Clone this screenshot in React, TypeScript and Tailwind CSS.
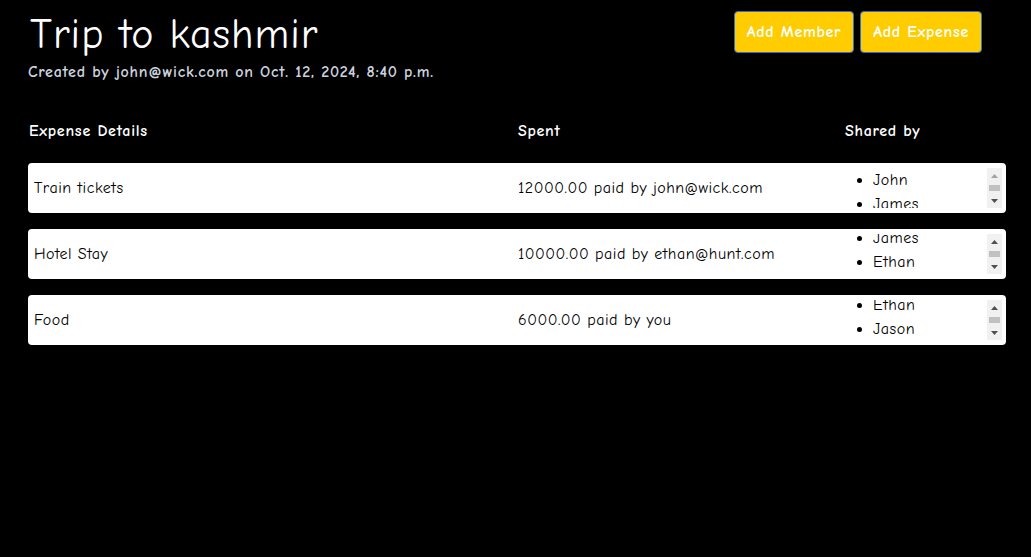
import React, { useEffect, useRef } from 'react';

type Expense = {
  id: number;
  title: string;
  amount: string;
  paidBy: string;
  sharedBy: string[];
  scroll: number;
  atTop: boolean;
};

const expenses: Expense[] = [
  { id: 1, title: 'Train tickets', amount: '12000.00', paidBy: 'john@wick.com', sharedBy: ['John', 'James', 'Ethan'], scroll: 0, atTop: true },
  { id: 2, title: 'Hotel Stay', amount: '10000.00', paidBy: 'ethan@hunt.com', sharedBy: ['John', 'James', 'Ethan'], scroll: 32, atTop: false },
  { id: 3, title: 'Food', amount: '6000.00', paidBy: 'you', sharedBy: ['James', 'Ethan', 'Jason'], scroll: 31, atTop: false },
];

// classic scrollbar look, drawn by hand since the headless one is hidden
const FakeScrollbar: React.FC<{ atTop: boolean }> = ({ atTop }) => (
  <div className="w-[15px] h-[40px] bg-[#f1f1f1] flex flex-col shrink-0">
    <div className="h-[15px] flex items-center justify-center">
      <svg width="7" height="4" viewBox="0 0 7 4">
        <polygon points="3.5,0 7,4 0,4" fill={atTop ? '#a3a3a3' : '#505050'} />
      </svg>
    </div>
    <div className="h-[10px] flex items-center px-[2px]">
      <div className="w-full h-[6px] bg-[#c1c1c1]" />
    </div>
    <div className="h-[15px] flex items-center justify-center">
      <svg width="7" height="4" viewBox="0 0 7 4">
        <polygon points="0,0 7,0 3.5,4" fill="#505050" />
      </svg>
    </div>
  </div>
);

const SharedList: React.FC<{ names: string[]; scroll: number; atTop: boolean }> = ({ names, scroll, atTop }) => {
  const ref = useRef<HTMLDivElement>(null);

  useEffect(() => {
    if (ref.current) ref.current.scrollTop = scroll;
  }, [scroll]);

  return (
    <div className="flex h-[40px]">
      <div ref={ref} className="flex-1 h-[40px] overflow-hidden">
        <ul className="list-disc pl-[28px]">
          {names.map((n) => (
            <li key={n} className="leading-[24px]">{n}</li>
          ))}
        </ul>
      </div>
      <FakeScrollbar atTop={atTop} />
    </div>
  );
};

export default function App() {
  return (
    <div
      className="min-h-[557px] bg-black text-white px-[28px] pt-[10px]"
      style={{ fontFamily: '"Comic Sans MS", "Comic Neue", "Noto Sans", sans-serif' }}
    >
      <div className="flex justify-between items-start">
        <div>
          <h1 className="text-[42px] leading-[50px] pl-[2px] tracking-[1px]">Trip to kashmir</h1>
          <p className="mt-[2px] text-[16px] font-bold text-[#ccd3de] leading-[20px] tracking-[0.73px]">
            Created by john@wick.com on Oct. 12, 2024, 8:40 p.m.
          </p>
        </div>
        <div className="flex gap-[6px] mr-[21px] mt-[1px]">
          <button className="h-[42px] px-[12px] bg-[#ffcc00] border border-[#2f6fd8] rounded-[4px] text-white font-bold text-[16px] tracking-[0.7px]">
            Add Member
          </button>
          <button className="h-[42px] px-[12px] bg-[#ffcc00] border border-[#2f6fd8] rounded-[4px] text-white font-bold text-[16px] tracking-[0.7px]">
            Add Expense
          </button>
        </div>
      </div>

      <div className="mt-[24px] w-[978px]">
        <div className="grid grid-cols-[484px_327px_1fr] font-bold text-[16px] leading-[20px] h-[50px] items-center tracking-[0.73px]">
          <div className="pl-[1px]">Expense Details</div>
          <div className="pl-[6px]">Spent</div>
          <div className="pl-[6px]">Shared by</div>
        </div>
        <div className="flex flex-col gap-[16px] mt-[7px]">
          {expenses.map((e) => (
            <div
              key={e.id}
              className="grid grid-cols-[484px_327px_1fr] items-center h-[50px] bg-white text-black rounded-[4px] text-[16px] tracking-[0.5px]"
            >
              <div className="pl-[6px]">{e.title}</div>
              <div className="pl-[6px]">{e.amount} paid by {e.paidBy}</div>
              <div className="pl-[6px] pr-[4px]">
                <SharedList names={e.sharedBy} scroll={e.scroll} atTop={e.atTop} />
              </div>
            </div>
          ))}
        </div>
      </div>
    </div>
  );
}
